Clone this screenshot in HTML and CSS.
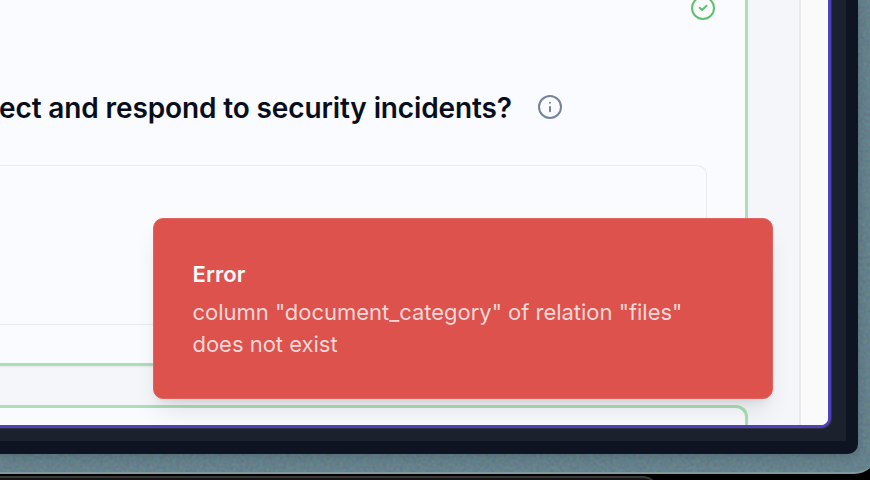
FILE: index.html
```
<!DOCTYPE html>
<html lang="en">
<head>
<meta charset="utf-8">
<title>Security questionnaire</title>
<link rel="stylesheet" href="styles.css">
</head>
<body>
<div class="desktop">
  <div class="wallpaper">
    <svg class="grain" width="878" height="474" aria-hidden="true">
      <filter id="grain" x="0" y="0" width="100%" height="100%" color-interpolation-filters="sRGB">
        <feTurbulence type="fractalNoise" baseFrequency="0.3" numOctaves="1" seed="4"/>
        <feColorMatrix values="0.12 0 0 0 0.34  0 0.12 0 0 0.45  0 0 0.16 0 0.47  0 0 0 0 1"/>
      </filter>
      <rect width="878" height="474" filter="url(#grain)"/>
    </svg>
    <div class="frame">
      <div class="bezel">
        <div class="window">
          <main class="content">
            <section class="card card-first">
              <header class="status">
                <svg width="26" height="26" viewBox="0 0 26 26" fill="none" stroke="#60c06c" stroke-width="2" stroke-linecap="round" stroke-linejoin="round"><circle cx="13" cy="13" r="11"/><path d="M9.7 12.7l2.4 2.3 4.4-4.2"/></svg>
              </header>
              <div class="question">
                <h2>ect and respond to security incidents?</h2>
                <svg width="26" height="26" viewBox="0 0 26 26" fill="none" stroke="#74829a" stroke-width="2" stroke-linecap="round"><circle cx="13" cy="13" r="11"/><path d="M13 13v4.2M13 8.7v.1"/></svg>
              </div>
              <div class="answer"></div>
            </section>
            <section class="card card-next"></section>
          </main>
          <aside class="gutter"></aside>
        </div>
      </div>
    </div>
  </div>
  <div class="dock"></div>
  <div class="toast" role="alert">
    <strong>Error</strong>
    <p>column "document_category" of relation "files"<br>does not exist</p>
  </div>
</div>
</body>
</html>
```
FILE: styles.css
```
* { box-sizing: border-box; }
body { margin: 0; font-family: Inter, "Liberation Sans", sans-serif; }
.desktop { position: relative; width: 870px; height: 480px; overflow: hidden; background: #000; }
.wallpaper { position: relative; width: 878px; height: 474px; overflow: hidden; background: #66828c; border-bottom: 2px solid #80979d; border-bottom-right-radius: 24px; }
.grain { position: absolute; inset: 0; }
.frame { position: relative; width: 858px; height: 454px; padding: 0 12px 13px 0; background: #0f1422; border-bottom-right-radius: 10px; box-shadow: 0 2px 12px rgba(20, 35, 45, .25); }
.bezel { width: 846px; height: 441px; padding: 0 15px 13px 0; background: #1c212e; }
.window { display: flex; width: 831px; height: 428px; overflow: hidden; background: #fafafa; border-right: 3px solid #5140bd; border-bottom: 3px solid #5140bd; border-bottom-right-radius: 10px; box-shadow: 0 0 1px 1px #343346; }
.content { width: 801px; flex: none; background: #f4f6fa; border-right: 2px solid #eaeaec; }
.gutter { flex: 1; background: #fafafa; }
.card { width: 748px; background: #fafbff; border-right: 3px solid #abdfb5; box-shadow: 0 1px 2px rgba(0, 0, 0, .06); }
.card-first { height: 366px; border-bottom: 3px solid #abdfb5; border-bottom-right-radius: 12px; }
.card-next { height: 60px; margin-top: 39px; border-top: 3px solid #abdfb5; border-top-right-radius: 12px; }
.status { display: flex; justify-content: flex-end; height: 94px; padding-right: 29px; }
.status svg { margin-top: -5px; }
.question { display: flex; align-items: center; height: 26px; gap: 26px; }
.question h2 { width: 512px; margin: 0 0 0 -1px; padding-top: 1px; font-size: 28px; line-height: 32px; font-weight: 600; letter-spacing: -.12px; color: #080e1c; white-space: nowrap; }
.answer { width: 707px; height: 160px; margin-top: 45px; border: 1px solid #e8eaf0; border-left: 0; border-top-right-radius: 10px; border-bottom-right-radius: 10px; }
.dock { width: 660px; height: 30px; margin-top: 2px; background: #151314; border-top: 2px solid #3a3b3a; border-top-right-radius: 18px; }
.toast { position: absolute; left: 153px; top: 218px; width: 620px; height: 181px; padding: 40px 38.5px 0; background: #dd524c; border: 1px solid #df645f; border-radius: 10px; box-shadow: 0 16px 24px -5px rgba(0, 0, 0, .1), 0 6px 10px -6px rgba(0, 0, 0, .12); color: #fafafa; }
.toast strong { display: block; font-size: 22px; line-height: 30px; font-weight: 600; letter-spacing: .1px; }
.toast p { margin: 7px 0 0; font-size: 22px; line-height: 32px; letter-spacing: -.02px; color: #f7d8d8; white-space: nowrap; }
```
